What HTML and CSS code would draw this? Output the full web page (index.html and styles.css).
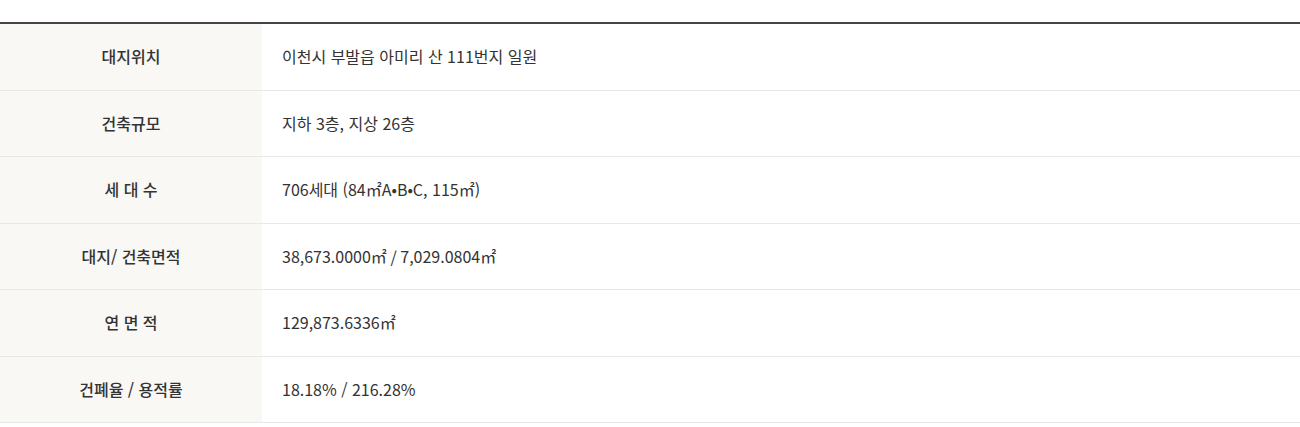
FILE: index.html
```html
<!DOCTYPE html>
<html lang="ko">
<head>
<meta charset="utf-8">
<link rel="stylesheet" href="styles.css">
</head>
<body>
<div class="wrap">
  <table class="info">
    <tbody>
      <tr><th>대지위치</th><td>이천시 부발읍 아미리 산 111번지 일원</td></tr>
      <tr><th>건축규모</th><td>지하 3층, 지상 26층</td></tr>
      <tr><th>세 대 수</th><td>706세대 (84㎡A•B•C, 115㎡)</td></tr>
      <tr><th>대지/ 건축면적</th><td>38,673.0000㎡ / 7,029.0804㎡</td></tr>
      <tr><th>연 면 적</th><td>129,873.6336㎡</td></tr>
      <tr><th>건폐율 / 용적률</th><td>18.18% / 216.28%</td></tr>
    </tbody>
  </table>
</div>
</body>
</html>
```
FILE: styles.css
```css
html, body {
  margin: 0;
  padding: 0;
  background: #fff;
}
body {
  font-family: "Noto Sans CJK KR", "Noto Sans", sans-serif;
  color: #333;
}
.wrap {
  padding-top: 22px;
}
.info {
  width: 100%;
  border-collapse: collapse;
  border-top: 2px solid #444;
  font-size: 16px;
  line-height: 25.5px;
}
.info th,
.info td {
  padding: 20px 0;
  border-bottom: 1px solid #e8e8e8;
  vertical-align: middle;
}
.info th {
  width: 262px;
  background: #f9f8f5;
  font-weight: 500;
  text-align: center;
  color: #333;
}
.info td {
  padding-left: 20px;
  text-align: left;
  font-weight: 400;
  color: #333;
}
```
